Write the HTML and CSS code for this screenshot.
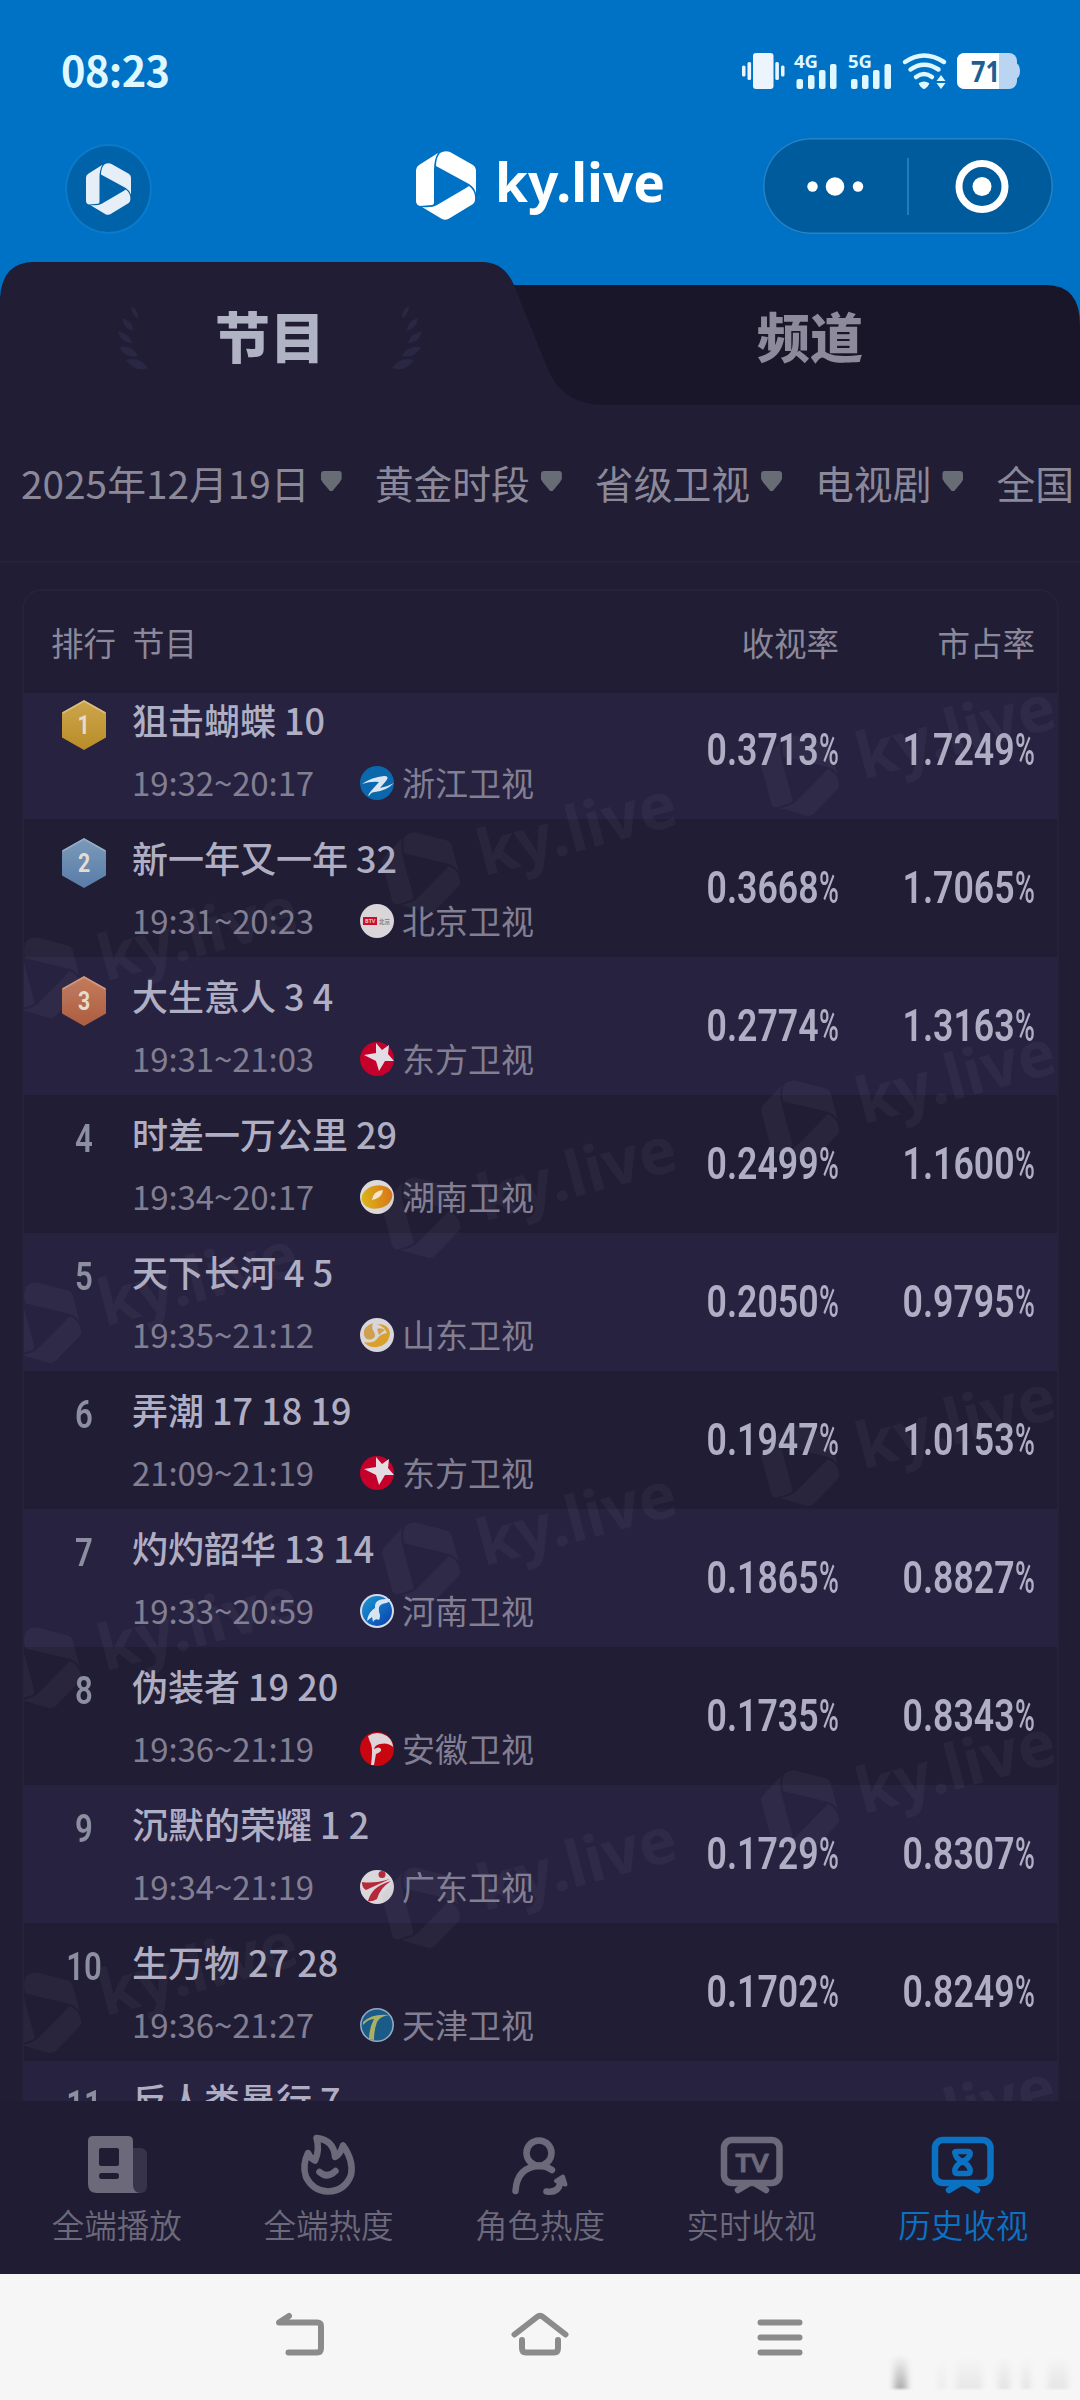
FILE: index.html
```html
<!DOCTYPE html>
<html lang="zh-CN">
<head>
    <meta charset="UTF-8">
    <meta name="viewport" content="width=device-width, initial-scale=1.0">
    <title>ky.live</title>
    <link rel="stylesheet" href="styles.css">
</head>
<body>
    <!-- shared shapes -->
    <svg class="defs" width="0" height="0">
        <defs>
            <symbol id="mark" viewBox="0 0 60 69">
                <path d="M22 2 L3 14 Q0 16 0 19 V50 Q0 54 4 55 L16 54 Q18 54 18 51 V19 Q18 8 22 2 Z"/>
                <path d="M24 2 Q29 -1 34 1 L57 14 Q60 16 60 19 V42 Q58 36 53 33 L20 15 Q20 7 24 2 Z"/>
                <path d="M53 35 Q60 40 59 49 Q59 51 57 53 L34 67 Q30 70 26 68 L6 56 Q16 57 21 54 L50 37 Z"/>
            </symbol>
            <symbol id="brand" viewBox="0 0 250 80">
                <use href="#mark" x="0" y="0" width="60" height="69"/>
                <text class="brand-text" x="79" y="51" textLength="170" lengthAdjust="spacingAndGlyphs">ky.live</text>
            </symbol>
            <symbol id="ch-dongfang" viewBox="0 0 34 34">
                <circle cx="17" cy="17" r="17" fill="#c4002b"/>
                <path d="M16 1 L22 8 L29 3 L28 12 L34 19 L25 19 L19 29 L16 19 L4 13 L16 11 Z" fill="#e3dce4"/>
            </symbol>
            <linearGradient id="gold" x1="0" y1="0" x2="0" y2="1"><stop offset="0" stop-color="#cda64c"/><stop offset="1" stop-color="#b98c28"/></linearGradient>
            <linearGradient id="silver" x1="0" y1="0" x2="0" y2="1"><stop offset="0" stop-color="#7c9ab9"/><stop offset="1" stop-color="#587ca8"/></linearGradient>
            <linearGradient id="bronze" x1="0" y1="0" x2="0" y2="1"><stop offset="0" stop-color="#c47c5d"/><stop offset="1" stop-color="#ac5e3f"/></linearGradient>
            <linearGradient id="orange" x1="0" y1="0" x2="1" y2="0"><stop offset="0" stop-color="#d9b51c"/><stop offset="1" stop-color="#dc7415"/></linearGradient>
            <linearGradient id="blue" x1="0" y1="0" x2="1" y2="1"><stop offset="0" stop-color="#1a9ad2"/><stop offset="1" stop-color="#0a3fae"/></linearGradient>
            <linearGradient id="smudge" x1="0" y1="0" x2="0" y2="1"><stop offset="0" stop-color="#000" stop-opacity="0"/><stop offset="1" stop-color="#000"/></linearGradient>
            <filter id="soft"><feGaussianBlur stdDeviation="3 1"/></filter>
        </defs>
    </svg>

    <header class="header">
        <div class="status">
            <span class="time">08:23</span>
            <svg class="status-icons" width="280" height="56" viewBox="741 43 280 56">
                <g fill="#ecf5fd">
                    <rect x="753" y="53" width="20.5" height="36" rx="3"/>
                    <rect x="742" y="65.500" width="3.500" height="11" rx="1.500"/>
                    <rect x="747.500" y="62" width="3.600" height="18" rx="1.500"/>
                    <rect x="775.300" y="62" width="3.600" height="18" rx="1.500"/>
                    <rect x="781" y="65.500" width="3.500" height="11" rx="1.500"/>
                </g>
                <g fill="#dff7ff">
                    <text class="net" x="794" y="67.500" textLength="24" lengthAdjust="spacingAndGlyphs">4G</text>
                    <rect x="796.500" y="79" width="6.500" height="10" rx="2"/>
                    <rect x="808" y="75" width="6.500" height="14" rx="2"/>
                    <rect x="819" y="70" width="6.500" height="19" rx="2"/>
                    <rect x="830" y="64" width="6.500" height="25" rx="2"/>
                    <text class="net" x="848" y="67.500" textLength="24" lengthAdjust="spacingAndGlyphs">5G</text>
                    <rect x="851" y="79" width="6.500" height="10" rx="2"/>
                    <rect x="862" y="75" width="6.500" height="14" rx="2"/>
                    <rect x="873" y="70" width="6.500" height="19" rx="2"/>
                    <rect x="884.500" y="64" width="6.500" height="25" rx="2"/>
                    <path d="M919 83 Q924 80 929 83 Q930 84 926 88 Q924 90 922 88 Q918 84 919 83 Z"/>
                    <path d="M941 75 L945.500 81 H936.500 Z M936.500 83 H945.500 L941 89 Z"/>
                </g>
                <g fill="none" stroke="#dff7ff" stroke-width="4.500" stroke-linecap="round">
                    <path d="M905 62 Q924 49 944 62"/>
                    <path d="M910.500 69.500 Q924 60 938.500 69.500"/>
                    <path d="M916 77 Q924 71 932 77"/>
                </g>
                <path d="M1016 63 Q1020 65 1020 71 Q1020 77 1016 79 Z" fill="#b9d5f2"/>
                <rect x="957" y="53" width="60" height="36" rx="8" fill="#b9d5f2"/>
                <path d="M965 53 H999 V89 H965 Q957 89 957 81 V61 Q957 53 965 53 Z" fill="#fff"/>
                <text class="level" x="971" y="81.500" textLength="29" lengthAdjust="spacingAndGlyphs">71</text>
            </svg>
        </div>
        <div class="nav">
            <div class="home-btn"><svg width="45" height="52"><use href="#mark"/></svg></div>
            <svg class="brand" width="250" height="80"><use href="#brand"/></svg>
            <div class="capsule">
                <svg width="290" height="96" viewBox="763 138 290 96">
                    <path d="M908 158 V215" stroke="#2f86c6" stroke-width="1.500"/>
                    <circle cx="812.500" cy="186.500" r="5.200" fill="#fff"/>
                    <circle cx="835" cy="186.500" r="9.300" fill="#fff"/>
                    <circle cx="858" cy="186.500" r="5.200" fill="#fff"/>
                    <circle cx="982" cy="186.500" r="23" fill="none" stroke="#fff" stroke-width="7"/>
                    <circle cx="982" cy="186.500" r="9.500" fill="#fff"/>
                </svg>
            </div>
        </div>
    </header>

    <section class="tabs">
        <svg class="tabs-bg" width="1080" height="144" viewBox="0 261 1080 144">
            <path d="M500 285 H1046 Q1080 285 1080 325 V405 H500 Z" fill="#19162a"/>
            <path d="M0 405 V298 Q2 262 34 262 H482 Q504 262 514 285 L547 367 Q561 405 606 405 Z" fill="#201d35"/>
        </svg>
        <div class="tab tab-on">
            <svg class="laurel" width="32" height="66" viewBox="0 0 32 66">
                <path d="M13 0 Q21 4 20 12 Q14 10 13 0 Z M4 12 Q15 15 15 25 Q5 22 4 12 Z M0 25 Q12 28 14 37 Q3 37 0 25 Z M1 41 Q15 39 20 50 Q7 53 1 41 Z M8 54 Q22 50 30 62 Q17 67 8 54 Z"/>
            </svg>
            <span>节目</span>
            <svg class="laurel flip" width="32" height="66" viewBox="0 0 32 66">
                <path d="M13 0 Q21 4 20 12 Q14 10 13 0 Z M4 12 Q15 15 15 25 Q5 22 4 12 Z M0 25 Q12 28 14 37 Q3 37 0 25 Z M1 41 Q15 39 20 50 Q7 53 1 41 Z M8 54 Q22 50 30 62 Q17 67 8 54 Z"/>
            </svg>
        </div>
        <div class="tab">频道</div>
    </section>

    <section class="filters">
        <div class="filter">2025年12月19日<i class="arrow"></i></div>
        <div class="filter">黄金时段<i class="arrow"></i></div>
        <div class="filter">省级卫视<i class="arrow"></i></div>
        <div class="filter">电视剧<i class="arrow"></i></div>
        <div class="filter">全国<i class="arrow"></i></div>
    </section>

    <main class="card">
        <div class="thead">
            <span class="th-rank">排行</span>
            <span>节目</span>
            <span class="th-rate">收视率</span>
            <span class="th-rate">市占率</span>
        </div>
        <div class="list">
            <div class="row">
                <svg class="medal" width="44" height="50" viewBox="0 0 44 50"><path d="M22 0 L44 12.500 V37.500 L22 50 L0 37.500 V12.500 Z" fill="url(#gold)"/><path d="M0.800 13 L22 1 L43.200 13" fill="none" stroke="#d9bf80" stroke-width="1.500"/><text class="medal-num" x="25.500" y="34">1</text></svg>
                <div class="info">
                    <div class="title">狙击蝴蝶 10</div>
                    <div class="meta"><span class="slot">19:32~20:17</span><svg class="ch" viewBox="0 0 34 34"><circle cx="17" cy="17" r="17" fill="#0c68ad"/><path d="M2 18 Q12 11 24 10 Q30 10 26 15 L20 22 Q27 21 34 17 Q26 25 15 26 Q11 26 9 30 Q7 30 11 25 L19 16 Q11 15 2 18 Z" fill="#dbe6f2"/></svg>浙江卫视</div>
                </div>
                <div class="rate"><span class="digits">0.3713</span><span class="pct">%</span></div>
                <div class="rate"><span class="digits">1.7249</span><span class="pct">%</span></div>
            </div>
            <div class="row">
                <svg class="medal" width="44" height="50" viewBox="0 0 44 50"><path d="M22 0 L44 12.500 V37.500 L22 50 L0 37.500 V12.500 Z" fill="url(#silver)"/><path d="M0.800 13 L22 1 L43.200 13" fill="none" stroke="#94adc6" stroke-width="1.500"/><text class="medal-num" x="26" y="34">2</text></svg>
                <div class="info">
                    <div class="title">新一年又一年 32</div>
                    <div class="meta"><span class="slot">19:31~20:23</span><svg class="ch" viewBox="0 0 34 34"><circle cx="17" cy="17" r="17" fill="#d9d5d8"/><rect x="3" y="13" width="14" height="8" fill="#c8102e"/><text class="btv" x="5" y="19">BTV</text><text class="btv btv-cn" x="19" y="19.500">北京</text></svg>北京卫视</div>
                </div>
                <div class="rate"><span class="digits">0.3668</span><span class="pct">%</span></div>
                <div class="rate"><span class="digits">1.7065</span><span class="pct">%</span></div>
            </div>
            <div class="row">
                <svg class="medal" width="44" height="50" viewBox="0 0 44 50"><path d="M22 0 L44 12.500 V37.500 L22 50 L0 37.500 V12.500 Z" fill="url(#bronze)"/><path d="M0.800 13 L22 1 L43.200 13" fill="none" stroke="#d29a80" stroke-width="1.500"/><text class="medal-num" x="26" y="34">3</text></svg>
                <div class="info">
                    <div class="title">大生意人 3 4</div>
                    <div class="meta"><span class="slot">19:31~21:03</span><svg class="ch"><use href="#ch-dongfang"/></svg>东方卫视</div>
                </div>
                <div class="rate"><span class="digits">0.2774</span><span class="pct">%</span></div>
                <div class="rate"><span class="digits">1.3163</span><span class="pct">%</span></div>
            </div>
            <div class="row">
                <div class="rank">4</div>
                <div class="info">
                    <div class="title">时差一万公里 29</div>
                    <div class="meta"><span class="slot">19:34~20:17</span><svg class="ch" viewBox="0 0 34 34"><circle cx="17" cy="17" r="17" fill="#dcdad8"/><ellipse cx="17" cy="17" rx="15.500" ry="11.500" fill="url(#orange)" transform="rotate(-12 17 17)"/><path d="M12 20 Q13 11 23 10 Q22 18 12 20 Z" fill="#f3e6c8"/></svg>湖南卫视</div>
                </div>
                <div class="rate"><span class="digits">0.2499</span><span class="pct">%</span></div>
                <div class="rate"><span class="digits">1.1600</span><span class="pct">%</span></div>
            </div>
            <div class="row">
                <div class="rank">5</div>
                <div class="info">
                    <div class="title">天下长河 4 5</div>
                    <div class="meta"><span class="slot">19:35~21:12</span><svg class="ch" viewBox="0 0 34 34"><circle cx="17" cy="17" r="17" fill="#d8d5db"/><path d="M13 5 Q2 9 4 17 Q6 23 12 21 Q17 19 14 14 Q11 10 13 5 Z" fill="#cfa04e"/><path d="M17 6 Q29 6 30 15 Q29 27 17 29 Q8 30 4 24 Q13 26 17 21 Q20 16 27 15 Q25 9 17 6 Z" fill="#d9a12b"/><path d="M17 11 Q21 9 25 12 Q22 14 19 17 Z" fill="#d0a24c"/></svg>山东卫视</div>
                </div>
                <div class="rate"><span class="digits">0.2050</span><span class="pct">%</span></div>
                <div class="rate"><span class="digits">0.9795</span><span class="pct">%</span></div>
            </div>
            <div class="row">
                <div class="rank">6</div>
                <div class="info">
                    <div class="title">弄潮 17 18 19</div>
                    <div class="meta"><span class="slot">21:09~21:19</span><svg class="ch"><use href="#ch-dongfang"/></svg>东方卫视</div>
                </div>
                <div class="rate"><span class="digits">0.1947</span><span class="pct">%</span></div>
                <div class="rate"><span class="digits">1.0153</span><span class="pct">%</span></div>
            </div>
            <div class="row">
                <div class="rank">7</div>
                <div class="info">
                    <div class="title">灼灼韶华 13 14</div>
                    <div class="meta"><span class="slot">19:33~20:59</span><svg class="ch" viewBox="0 0 34 34"><circle cx="17" cy="17" r="17" fill="#d4dbe6"/><circle cx="17" cy="17" r="15" fill="url(#blue)"/><path d="M26 5 Q14 5 15 14 Q8 18 7 27 L12 23 L13 28 Q15 24 19 26 Q21 22 19 18 Q17 10 26 9 Q30 8 30 5 Z" fill="#d7e4f1"/></svg>河南卫视</div>
                </div>
                <div class="rate"><span class="digits">0.1865</span><span class="pct">%</span></div>
                <div class="rate"><span class="digits">0.8827</span><span class="pct">%</span></div>
            </div>
            <div class="row">
                <div class="rank">8</div>
                <div class="info">
                    <div class="title">伪装者 19 20</div>
                    <div class="meta"><span class="slot">19:36~21:19</span><svg class="ch" viewBox="0 0 34 34"><circle cx="17" cy="17" r="17" fill="#c9050f"/><path d="M8 4 Q17 -2 27 4 Q33 9 33 15 Q28 10 20 12 Q15 13 14 17 Q19 14 21 17 Q22 20 16 22 L14 33 L11 33 Q13 18 11 12 Q9 8 8 4 Z" fill="#ddd5d9"/></svg>安徽卫视</div>
                </div>
                <div class="rate"><span class="digits">0.1735</span><span class="pct">%</span></div>
                <div class="rate"><span class="digits">0.8343</span><span class="pct">%</span></div>
            </div>
            <div class="row">
                <div class="rank">9</div>
                <div class="info">
                    <div class="title">沉默的荣耀 1 2</div>
                    <div class="meta"><span class="slot">19:34~21:19</span><svg class="ch" viewBox="0 0 34 34"><circle cx="17" cy="17" r="17" fill="#dad8dc"/><circle cx="22" cy="4.500" r="3.500" fill="#b32a3a"/><path d="M2 12 Q14 14 30 9 Q19 14 6 20 Q2 18 2 12 Z M8 31 Q12 16 31 11 Q20 18 17 29 Q12 32 8 31 Z" fill="#b5293a"/></svg>广东卫视</div>
                </div>
                <div class="rate"><span class="digits">0.1729</span><span class="pct">%</span></div>
                <div class="rate"><span class="digits">0.8307</span><span class="pct">%</span></div>
            </div>
            <div class="row">
                <div class="rank">10</div>
                <div class="info">
                    <div class="title">生万物 27 28</div>
                    <div class="meta"><span class="slot">19:36~21:27</span><svg class="ch" viewBox="0 0 34 34"><circle cx="17" cy="17" r="16.200" fill="#1b5b87" stroke="#92a9c0" stroke-width="1.600"/><path d="M3 14 Q12 5 30 7 Q20 8 17 14 Q14 22 14 32 L9 31 Q9 20 14 11 Q8 11 3 17 Z" fill="#a9b065"/></svg>天津卫视</div>
                </div>
                <div class="rate"><span class="digits">0.1702</span><span class="pct">%</span></div>
                <div class="rate"><span class="digits">0.8249</span><span class="pct">%</span></div>
            </div>
            <div class="row">
                <div class="rank">11</div>
                <div class="info">
                    <div class="title">反人类暴行 7</div>
                </div>
            </div>
            <!-- watermark, one brand per tile -->
            <svg class="watermark" width="1033" height="1408" viewBox="24 693 1033 1408">
                <defs>
                    <g id="stamp"><use href="#brand" x="-37" y="-42" width="300" height="96" transform="rotate(-15)"/></g>
                    <g id="stamps">
                        <use href="#stamp" x="44" y="978"/>
                        <use href="#stamp" x="423" y="873"/>
                        <use href="#stamp" x="802" y="776"/>
                    </g>
                </defs>
                <use href="#stamps"/>
                <use href="#stamps" y="345"/>
                <use href="#stamps" y="690"/>
                <use href="#stamps" y="1035"/>
                <use href="#stamps" y="1380"/>
            </svg>
        </div>
    </main>

    <nav class="tabbar">
        <div class="item">
            <svg width="64" height="64" viewBox="85 2135 64 64">
                <rect x="120" y="2150" width="27" height="45" rx="6" fill="#37334b"/>
                <path fill="#6c697a" fill-rule="evenodd" d="M93 2138 H128 Q133 2138 133 2143 V2187 Q133 2194 140 2195 H97 Q88 2195 88 2186 V2143 Q88 2138 93 2138 Z M101 2150 Q99 2150 99 2152 V2166 Q99 2168 101 2168 H117 Q119 2168 119 2166 V2152 Q119 2150 117 2150 Z M101.500 2175 Q99 2175 99 2178 Q99 2181 101.500 2181 H116.500 Q119 2181 119 2178 Q119 2175 116.500 2175 Z"/>
            </svg>
            <span>全端播放</span>
        </div>
        <div class="item">
            <svg width="64" height="64" viewBox="297 2135 64 64" fill="none" stroke="#6c697a" stroke-width="6.500" stroke-linejoin="round" stroke-linecap="round">
                <path d="M309 2155 Q303 2167 307 2179 Q314 2193 329 2193.500 Q346 2193 352 2177 Q355 2163 344 2147.500 Q341 2157 336 2159 Q335 2142 317.500 2140 Q321 2152 316 2162.500 Q311 2160 309 2155 Z"/>
                <path d="M320.500 2174 Q328.500 2181 336.500 2173"/>
            </svg>
            <span>全端热度</span>
        </div>
        <div class="item">
            <svg width="64" height="64" viewBox="508 2136 64 64" fill="none" stroke="#6c697a" stroke-width="6.500" stroke-linejoin="round" stroke-linecap="round">
                <circle cx="539" cy="2156" r="12.500"/>
                <path d="M515.500 2194 Q517 2170 539 2169 Q546 2169 552 2173"/>
                <path d="M546.500 2194.500 Q558 2196 560 2187"/>
                <path d="M563 2179.500 L565.500 2187.500 L556 2184 Z" fill="#6c697a" stroke-width="4"/>
            </svg>
            <span>角色热度</span>
        </div>
        <div class="item">
            <svg width="64" height="64" viewBox="720 2135 64 64" fill="none" stroke="#6c697a" stroke-width="6.500" stroke-linejoin="round" stroke-linecap="round">
                <rect x="724" y="2142" width="55.500" height="43" rx="8"/>
                <path d="M748 2186 L738 2192 M756 2186 L766 2192"/>
                <text class="tv" x="752" y="2174" textLength="33" lengthAdjust="spacingAndGlyphs">TV</text>
            </svg>
            <span>实时收视</span>
        </div>
        <div class="item item-on">
            <svg width="64" height="64" viewBox="931 2135 64 64" fill="none" stroke="#0b72c3" stroke-width="6.500" stroke-linejoin="round" stroke-linecap="round">
                <rect x="935" y="2142" width="55.500" height="43" rx="8"/>
                <path d="M959 2186 L949 2192 M967 2186 L977 2192"/>
                <path d="M955 2155 Q954 2153.500 957 2153.500 H968 Q971 2153.500 970 2157 Q968 2161 962.500 2163.500 Q957 2166 955 2171 Q954 2175.500 957 2175.500 H968 Q971 2175.500 970 2171 Q968 2166 962.500 2163.500 Q956 2161 955 2155 Z" stroke-width="5.500"/>
            </svg>
            <span>历史收视</span>
        </div>
    </nav>

    <footer class="sysbar">
        <svg width="1080" height="126" viewBox="0 2274 1080 126" fill="none" stroke="#8b8b8b" stroke-width="6" stroke-linecap="round" stroke-linejoin="round">
            <path d="M288.500 2352.500 H317 Q321 2352.500 321 2348 V2326 Q321 2322.500 317 2322.500 H279 L289 2316"/>
            <path d="M514.500 2334.500 L537 2317 Q540 2314.500 543 2317 L565.500 2334.500 M522 2340 V2348 Q522 2352.500 526 2352.500 H554 Q558 2352.500 558 2348 V2340"/>
            <path d="M760.500 2322.500 H799.500 M760.500 2337.500 H799.500 M760.500 2352.500 H799.500"/>
            <g filter="url(#soft)" stroke="none" fill="url(#smudge)">
                <rect x="894" y="2355" width="13" height="34" opacity=".3"/>
                <rect x="938" y="2357" width="8" height="32" opacity=".04"/>
                <rect x="956" y="2357" width="26" height="32" opacity=".06"/>
                <rect x="998" y="2357" width="12" height="32" opacity=".08"/>
                <rect x="1022" y="2357" width="8" height="32" opacity=".08"/>
                <rect x="1048" y="2357" width="20" height="32" opacity=".07"/>
            </g>
        </svg>
    </footer>
</body>
</html>
```
FILE: styles.css
```css
*{
    margin:0;padding:0;box-sizing:border-box;
}
body{
    width:1080px;
    height:2400px;
    overflow:hidden;
    display:flex;
    flex-direction:column;
    background-color:#201d35;
    font-family:"Noto Sans CJK SC","Noto Sans",sans-serif;
    color:#8b8999;
}
svg{
    display:block;
    flex:none;
}
.defs{
    position:absolute;
}
.brand-text{
    font:700 53px "Noto Sans","Open Sans",sans-serif;
}

/* header */
.header{
    height:261px;
    background-color:#0072c6;
    flex:none;
}
.status{
    height:138px;
    padding:43px 59px 0 61px;
    display:flex;
    justify-content:space-between;
}
.time{
    font-size:41.500px;
    line-height:52px;
    font-weight:600;
    letter-spacing:-.6px;
    color:#dff7ff;
}
.net{
    font:700 18.500px "Noto Sans",sans-serif;
}
.level{
    font:700 29px "Noto Sans",sans-serif;
    fill:#1c5f94;
}
.nav{
    display:flex;
    align-items:flex-start;
    padding-left:65px;
}
.home-btn{
    width:87px;
    height:90px;
    margin-top:6px;
    border-radius:50%;
    border:2px solid #0a7bcb;
    background-color:#0062a9;
    display:flex;
    align-items:center;
    justify-content:center;
    fill:#e6eef8;
}
.brand{
    margin:13px 0 0 264px;
    fill:#fff;
}
.capsule{
    width:290px;
    height:96px;
    margin-left:97px;
    border-radius:48px;
    background-color:#005b9d;
    box-shadow:inset 0 0 0 1.5px #2584c9;
}

/* tabs */
.tabs{
    height:144px;
    display:flex;
    position:relative;
    background-color:#0072c6;
    flex:none;
}
.tabs-bg{
    position:absolute;
    left:0;
    top:0;
}
.tab{
    position:relative;
    width:540px;
    padding-top:40px;
    display:flex;
    justify-content:center;
    font-size:53px;
    line-height:68px;
    font-weight:900;
    color:#8d8b9b;
}
.tab-on{
    font-size:55px;
    color:#b0b3c3;
    gap:65px;
    padding-top:39px;
}
.laurel{
    fill:#2a2745;
    margin-top:6px;
}
.flip{
    transform:scaleX(-1);
}

/* filters */
.filters{
    height:158px;
    padding:48px 0 0 21px;
    display:flex;
    align-items:flex-start;
    gap:33px;
    font-size:38.800px;
    line-height:58px;
    white-space:nowrap;
    border-bottom:2px solid #24213a;
    overflow:hidden;
    flex:none;
}
.filter{
    display:flex;
    align-items:center;
}
.arrow{
    width:21px;
    height:20px;
    margin:0 0 2px 11px;
    background-color:#686c75;
    border-radius:3px 3px 0 0;
    clip-path:polygon(0 0,100% 0,100% 40%,90% 58%,56% 100%,44% 100%,10% 58%,0 40%);
}

/* table */
.card{
    margin:26px 21px 0 22px;
    border:2px solid #25223a;
    border-bottom:0;
    border-radius:20px 20px 0 0;
    height:1512px;
    flex:none;
}
.thead{
    height:102px;
    padding:0 22px 2px 27px;
    display:grid;
    grid-template-columns:81px 1fr 196px 196px;
    align-items:center;
    font-size:32.500px;
}
.th-rate{
    text-align:right;
}
.list{
    position:relative;
    height:1408px;
    overflow:hidden;
}
.row{
    height:138px;
    padding-right:22px;
    display:grid;
    grid-template-columns:108px 1fr 196px 196px;
}
.row:first-child{
    margin-top:-12px;
}
.row:nth-child(odd){
    background-color:#272240;
}
.medal{
    margin:19px 0 0 38px;
}
.medal-num{
    font:700 25px Roboto,sans-serif;
    text-anchor:middle;
    fill:#e4dccf;
    transform:scaleX(.85);
}
.rank{
    width:60px;
    margin:19px 0 0 30px;
    font:600 38px/50px Roboto,sans-serif;
    text-align:center;
    color:#8b8f9f;
    transform:scaleX(.82);
}
.info{
    padding-top:12px;
}
.title{
    font-size:36px;
    line-height:52px;
    font-weight:500;
    color:#b0aec2;
    white-space:nowrap;
}
.meta{
    margin-top:14px;
    display:flex;
    align-items:center;
    font-size:33px;
    line-height:46px;
    color:#827f93;
}
.slot{
    width:228px;
    letter-spacing:-.1px;
}
.ch{
    width:34px;
    height:34px;
    margin:1px 8px 0 0;
}
.btv{
    font:700 5.500px "Noto Sans",sans-serif;
    fill:#f0c8cc;
}
.btv-cn{
    font-family:"Noto Sans CJK SC",sans-serif;
    fill:#77838a;
}
.rate{
    display:flex;
    justify-content:flex-end;
    padding-top:44px;
    font:600 43.500px/52px Roboto,sans-serif;
    color:#b0aec4;
}
.digits{
    transform:scaleX(.82);
    transform-origin:right;
}
.pct{
    width:20px;
    font-weight:500;
    transform:scaleX(.62);
    transform-origin:left;
}
.watermark{
    position:absolute;
    left:0;
    top:0;
    fill:#8e8aa0;
    opacity:.075;
}

/* bottom bars */
.tabbar{
    height:173px;
    padding:32px 11px 0;
    display:flex;
    background-color:#201c34;
    flex:none;
}
.item{
    flex:1;
    display:flex;
    flex-direction:column;
    align-items:center;
    font-size:32.500px;
    line-height:46px;
    font-weight:350;
    color:#6c697a;
}
.item span{
    margin-top:4px;
}
.item-on{
    color:#0b72c3;
}
.tv{
    font:700 24px Lato,sans-serif;
    text-anchor:middle;
    fill:#6c697a;
    stroke-width:1;
}
.sysbar{
    height:126px;
    background-color:#f6f6f6;
    flex:none;
}
```
